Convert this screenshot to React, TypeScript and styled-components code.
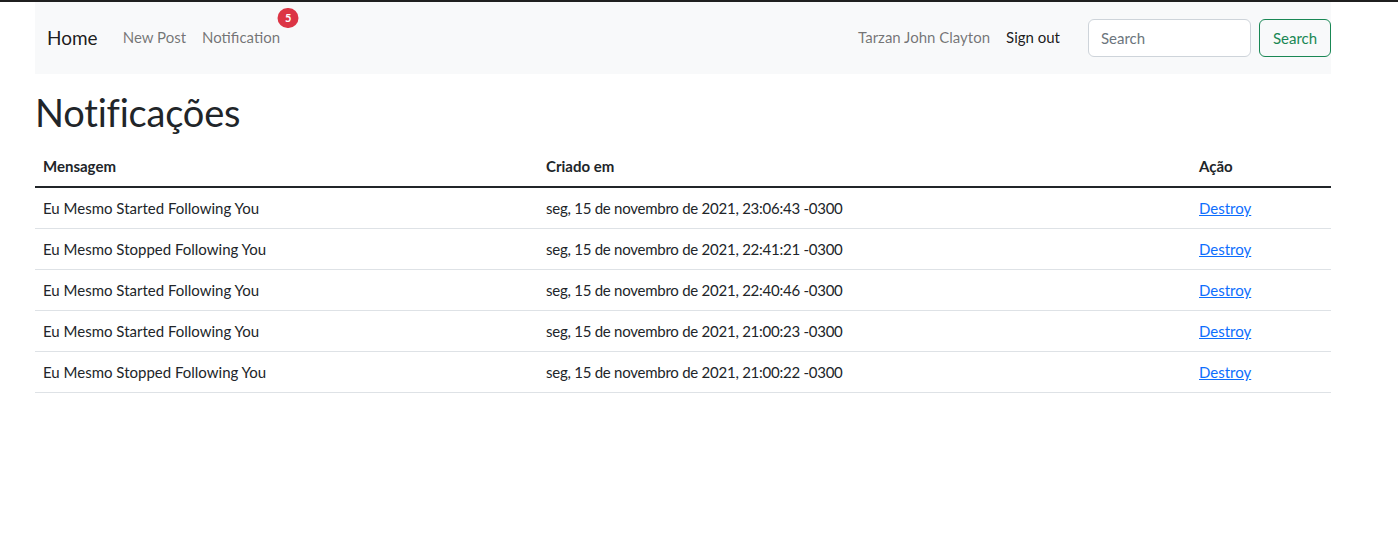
import React from "react";
import styled, { createGlobalStyle } from "styled-components";

const GlobalStyle = createGlobalStyle`
  html, body { margin: 0; padding: 0; background: #fff; }
  body {
    font-family: Lato, "Open Sans", sans-serif;
    font-size: 15px;
    line-height: 1.5;
    color: #212529;
  }
  * { box-sizing: border-box; }
`;

const TopLine = styled.div`
  height: 2px;
  background: #1f1f1f;
`;

const Container = styled.div`
  width: 1296px;
  margin-left: 35px;
`;

const Navbar = styled.nav`
  display: flex;
  align-items: center;
  height: 72px;
  padding-left: 12px;
  background: #f8f9fa;
`;

const Brand = styled.a`
  font-size: 19px;
  line-height: 30px;
  color: rgba(0, 0, 0, 0.9);
  margin-right: 17px;
  margin-top: -1px;
  text-decoration: none;
`;

const NavList = styled.div`
  display: flex;
  align-items: center;
`;

const NavLink = styled.a<{ $dark?: boolean }>`
  position: relative;
  display: block;
  padding: 7px 8px 9px;
  line-height: 24px;
  font-size: 15px;
  color: ${(p) => (p.$dark ? "rgba(0,0,0,0.9)" : "rgba(0,0,0,0.55)")};
  text-decoration: none;
`;

const Badge = styled.span`
  position: absolute;
  top: 0;
  left: 100%;
  transform: translate(-50%, -50%);
  min-width: 21px;
  height: 20px;
  padding: 0 7px;
  border-radius: 10px;
  background: #dc3545;
  color: #fff;
  font-size: 11px;
  font-weight: 700;
  line-height: 20px;
  text-align: center;
`;

const RightSide = styled.div`
  margin-left: auto;
  display: flex;
  align-items: center;
`;

const SearchForm = styled.form`
  display: flex;
  align-items: center;
  gap: 8px;
  margin-left: 20px;
`;

const SearchInput = styled.input`
  width: 163px;
  height: 38px;
  padding: 6px 12px;
  border: 1px solid #ced4da;
  border-radius: 6px;
  font-family: inherit;
  font-size: 15px;
  color: #212529;
  background: #fff;
  outline: none;
  &::placeholder { color: #6c757d; }
`;

const OutlineButton = styled.button`
  width: 72px;
  height: 38px;
  padding: 6px 0;
  border: 1px solid #198754;
  border-radius: 6px;
  background: transparent;
  color: #198754;
  font-family: inherit;
  font-size: 15px;
  line-height: 24px;
  cursor: pointer;
`;

const Title = styled.h1`
  margin: 15px 0 11px;
  font-size: 38px;
  font-weight: 400;
  line-height: 46px;
  letter-spacing: -0.2px;
  color: #212529;
`;

const Table = styled.table`
  width: 100%;
  border-collapse: collapse;
  table-layout: fixed;
`;

const Th = styled.th<{ $w: number }>`
  width: ${(p) => p.$w}px;
  padding: 8px;
  line-height: 24px;
  text-align: left;
  font-weight: 700;
  border-bottom: 2px solid #212529;
`;

const Td = styled.td<{ $tight?: boolean }>`
  padding: 8px;
  line-height: 24px;
  letter-spacing: ${(p) => (p.$tight ? "-0.25px" : "0")};
  border-bottom: 1px solid #dee2e6;
`;

const Link = styled.a`
  color: #0d6efd;
  text-decoration: underline;
`;

const rows = [
  ["Eu Mesmo Started Following You", "seg, 15 de novembro de 2021, 23:06:43 -0300"],
  ["Eu Mesmo Stopped Following You", "seg, 15 de novembro de 2021, 22:41:21 -0300"],
  ["Eu Mesmo Started Following You", "seg, 15 de novembro de 2021, 22:40:46 -0300"],
  ["Eu Mesmo Started Following You", "seg, 15 de novembro de 2021, 21:00:23 -0300"],
  ["Eu Mesmo Stopped Following You", "seg, 15 de novembro de 2021, 21:00:22 -0300"],
];

export default function App() {
  return (
    <>
      <GlobalStyle />
      <TopLine />
      <Container>
        <Navbar>
          <Brand href="#">Home</Brand>
          <NavList>
            <NavLink href="#">New Post</NavLink>
            <NavLink href="#">
              Notification
              <Badge>5</Badge>
            </NavLink>
          </NavList>
          <RightSide>
            <NavLink href="#">Tarzan John Clayton</NavLink>
            <NavLink href="#" $dark>
              Sign out
            </NavLink>
            <SearchForm onSubmit={(e) => e.preventDefault()}>
              <SearchInput type="search" placeholder="Search" />
              <OutlineButton type="submit">Search</OutlineButton>
            </SearchForm>
          </RightSide>
        </Navbar>
        <Title>Notificações</Title>
        <Table>
          <thead>
            <tr>
              <Th $w={503}>Mensagem</Th>
              <Th $w={653}>Criado em</Th>
              <Th $w={140}>Ação</Th>
            </tr>
          </thead>
          <tbody>
            {rows.map((r, i) => (
              <tr key={i}>
                <Td>{r[0]}</Td>
                <Td $tight>{r[1]}</Td>
                <Td>
                  <Link href="#">Destroy</Link>
                </Td>
              </tr>
            ))}
          </tbody>
        </Table>
      </Container>
    </>
  );
}
